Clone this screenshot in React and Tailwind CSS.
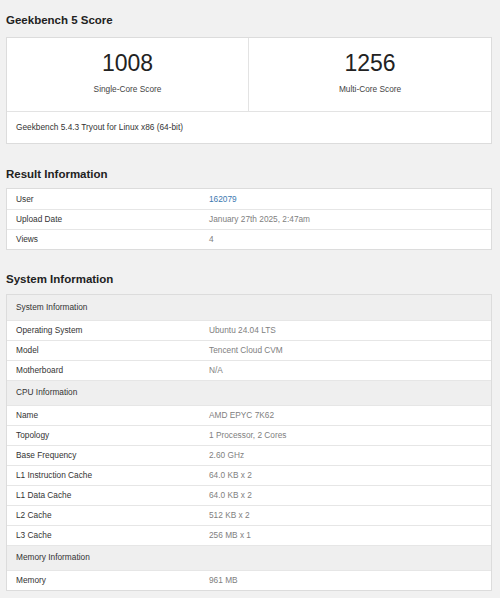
const systemRows = [
    { header: "System Information" },
    { label: "Operating System", value: "Ubuntu 24.04 LTS" },
    { label: "Model", value: "Tencent Cloud CVM" },
    { label: "Motherboard", value: "N/A" },
    { header: "CPU Information" },
    { label: "Name", value: "AMD EPYC 7K62" },
    { label: "Topology", value: "1 Processor, 2 Cores" },
    { label: "Base Frequency", value: "2.60 GHz" },
    { label: "L1 Instruction Cache", value: "64.0 KB x 2" },
    { label: "L1 Data Cache", value: "64.0 KB x 2" },
    { label: "L2 Cache", value: "512 KB x 2" },
    { label: "L3 Cache", value: "256 MB x 1" },
    { header: "Memory Information" },
    { label: "Memory", value: "961 MB" },
];

const SectionHeading = ({ children }) => (
    <h2 className="px-[6px] text-[11.5px] font-bold text-[#222] leading-none">{children}</h2>
);

const InfoRow = ({ label, value, link }) => (
    <div className="flex h-5 items-center border-t border-[#e6e6e6] first:border-t-0">
        <div className="w-[202px] pl-[9px] text-[#333]">{label}</div>
        <div className={link ? "text-[#3b78b0]" : "text-[#808080]"}>{value}</div>
    </div>
);

const App = () => {
    return (
        <div
            className="min-h-[598px] w-[500px] bg-[#f1f1f1] pt-[15px] text-[8.3px]"
            style={{ fontFamily: '"Liberation Sans", Arial, sans-serif' }}
        >
            {/* SCORE */}
            <SectionHeading>Geekbench 5 Score</SectionHeading>
            <div className="mx-[6px] mt-[10px] w-[486px] border border-[#dcdcdc] bg-white">
                <div className="grid grid-cols-2 border-b border-[#e3e3e3]">
                    <div className="flex h-[73px] flex-col items-center justify-center border-r border-[#e3e3e3]">
                        <div className="text-[23px] leading-none text-[#222]">1008</div>
                        <div className="mt-[8px] text-[#444]">Single-Core Score</div>
                    </div>
                    <div className="flex h-[73px] flex-col items-center justify-center">
                        <div className="text-[23px] leading-none text-[#222]">1256</div>
                        <div className="mt-[8px] text-[#444]">Multi-Core Score</div>
                    </div>
                </div>
                <div className="flex h-[31px] items-center pl-[9px] text-[#333]">
                    Geekbench 5.4.3 Tryout for Linux x86 (64-bit)
                </div>
            </div>

            {/* RESULT */}
            <div className="mt-[25px]">
                <SectionHeading>Result Information</SectionHeading>
            </div>
            <div className="mx-[6px] mt-[8px] w-[486px] border border-[#dcdcdc] bg-white">
                <InfoRow label="User" value="162079" link />
                <InfoRow label="Upload Date" value="January 27th 2025, 2:47am" />
                <InfoRow label="Views" value="4" />
            </div>

            {/* SYSTEM */}
            <div className="mt-[24px]">
                <SectionHeading>System Information</SectionHeading>
            </div>
            <div className="mx-[6px] mt-[8px] w-[486px] border border-[#dcdcdc] bg-white">
                {systemRows.map((row, i) =>
                    row.header ? (
                        <div
                            key={i}
                            className="flex h-[25px] items-center border-t border-[#e6e6e6] bg-[#efefef] pl-[9px] text-[#333] first:border-t-0"
                        >
                            {row.header}
                        </div>
                    ) : (
                        <InfoRow key={i} label={row.label} value={row.value} />
                    )
                )}
            </div>
        </div>
    );
};

export default App;
